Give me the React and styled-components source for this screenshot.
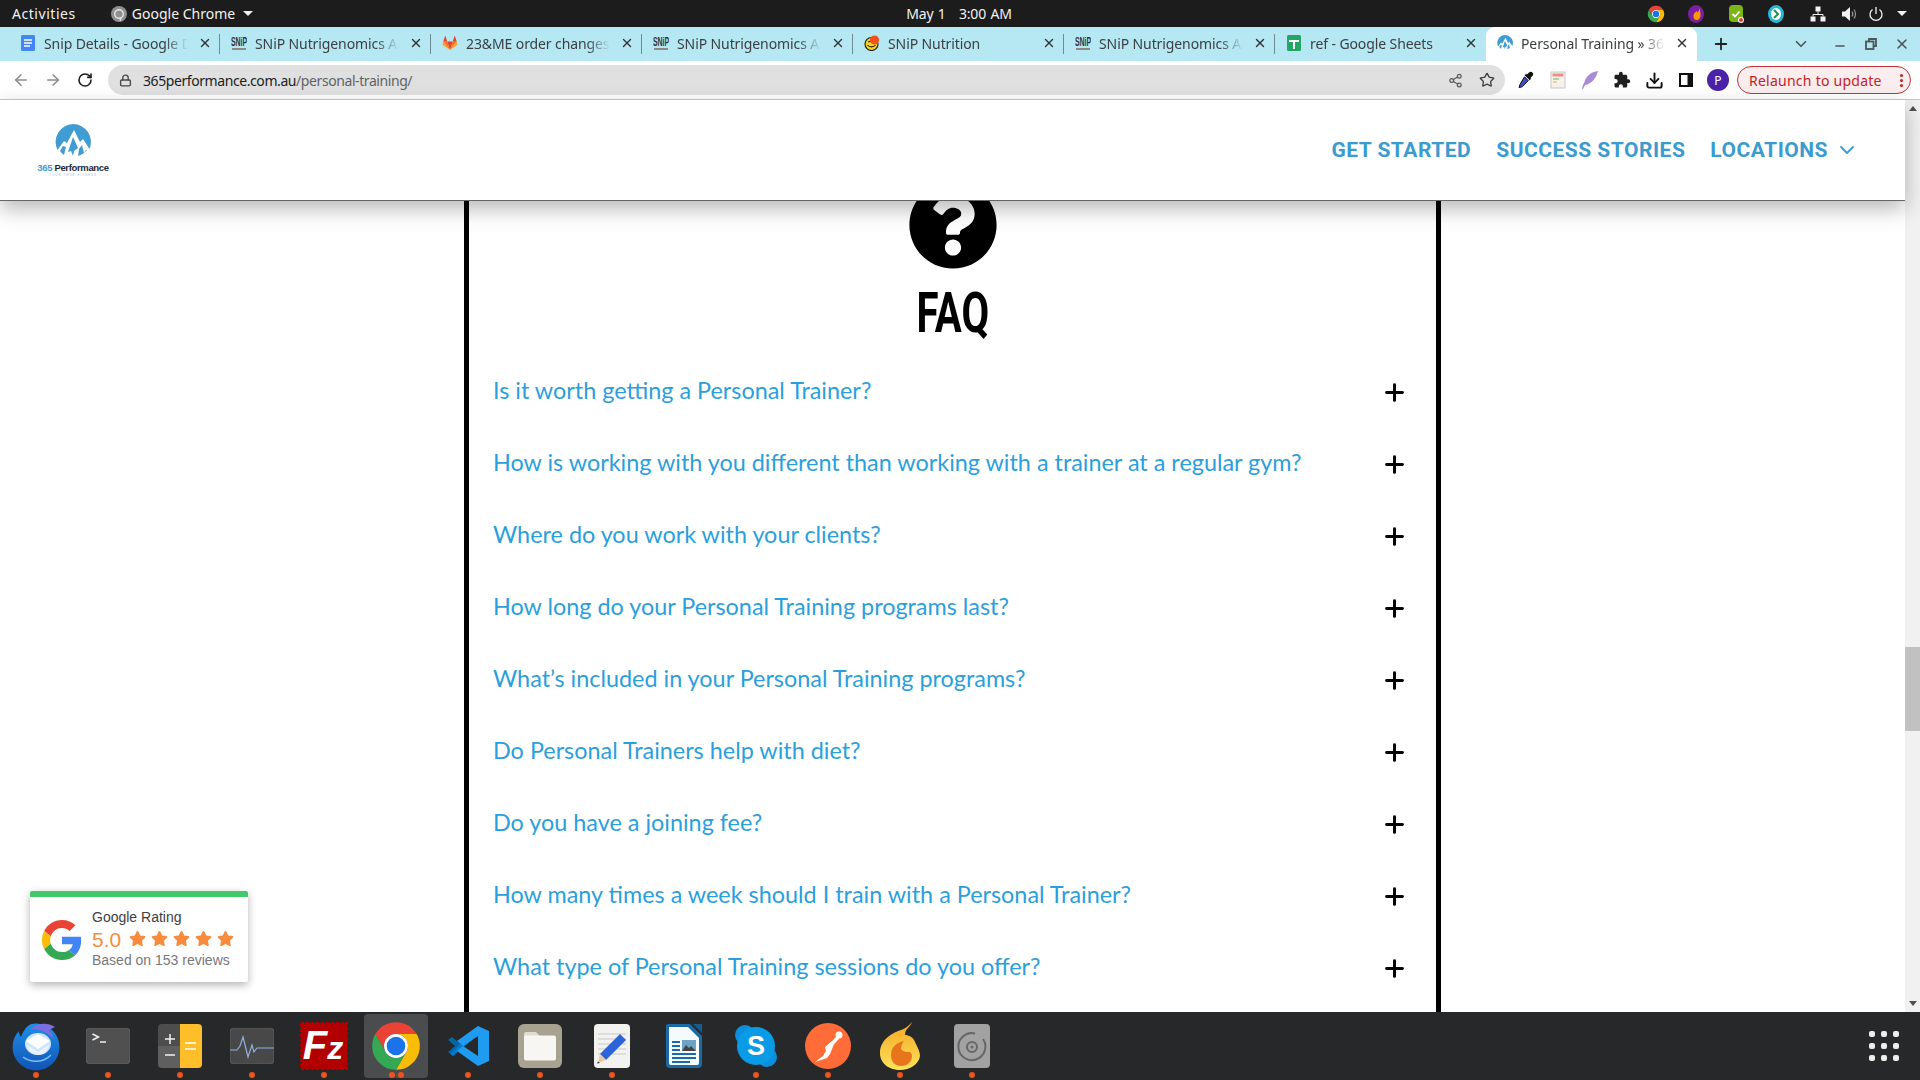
import React from "react";
import styled, { createGlobalStyle } from "styled-components";
import { FaQuestionCircle, FaStar } from "react-icons/fa";
import {
  ArrowLeft,
  ArrowRight,
  RotateCw,
  Lock,
  Share2,
  Star,
  Download,
  X,
  Plus,
  ChevronDown,
  Minus,
} from "lucide-react";

const GlobalStyle = createGlobalStyle`
  html, body { margin: 0; padding: 0; background: #fff; overflow: hidden; }
  * { box-sizing: border-box; }
`;

const UI_FONT = `"Noto Sans", "Open Sans", sans-serif`;

const Screen = styled.div`
  width: 1920px;
  height: 1080px;
  display: flex;
  flex-direction: column;
  position: relative;
  overflow: hidden;
  font-family: ${UI_FONT};
`;

/* gnome top bar */
const TopBar = styled.div`
  height: 27px;
  flex: none;
  background: #1c1c1c;
  color: #f2f2f2;
  display: grid;
  grid-template-columns: 1fr auto 1fr;
  align-items: center;
  font-size: 14px;
  padding: 0 14px 0 12px;
`;
const TopLeft = styled.div`
  display: flex;
  align-items: center;
`;
const Activities = styled.span`
  letter-spacing: 0.55px;
`;
const AppName = styled.div`
  display: flex;
  align-items: center;
  gap: 5px;
  margin-left: 35px;
`;
const Caret = styled.span`
  width: 0;
  height: 0;
  margin-left: 3px;
  border-left: 5px solid transparent;
  border-right: 5px solid transparent;
  border-top: 5px solid #f2f2f2;
`;
const Clock = styled.div`
  letter-spacing: -0.2px;
  word-spacing: 1px;
  white-space: pre;
`;
const Tray = styled.div`
  display: flex;
  justify-content: flex-end;
  align-items: center;
`;
const TrayItem = styled.div`
  width: ${(p) => p.$w}px;
  display: flex;
  justify-content: center;
  align-items: center;
`;

/* chrome tabs */
const TabStrip = styled.div`
  height: 34px;
  flex: none;
  background: #b5e8f2;
  display: flex;
  align-items: stretch;
  padding: 0 5px 0 9px;
`;
const Tab = styled.div`
  width: 211px;
  flex: none;
  position: relative;
  display: flex;
  align-items: center;
  gap: 8px;
  padding: 0 6px 2px 11px;
  font-size: 14px;
  letter-spacing: -0.1px;
  color: #3c4043;
  background: ${(p) => (p.$active ? "#fff" : "transparent")};
  border-radius: ${(p) => (p.$active ? "9px 9px 0 0" : "0")};

  &::after {
    content: "";
    position: absolute;
    right: 0;
    top: 7px;
    bottom: 7px;
    width: 1px;
    background: ${(p) => (p.$sep ? "#6d8b91" : "transparent")};
  }
`;
const TabTitle = styled.span`
  flex: 1;
  overflow: hidden;
  white-space: nowrap;
  -webkit-mask-image: linear-gradient(to right, #000 84%, transparent 100%);
  mask-image: linear-gradient(to right, #000 84%, transparent 100%);
`;
const FavSlot = styled.span`
  width: 16px;
  height: 16px;
  flex: none;
  display: flex;
  align-items: center;
  justify-content: center;
  overflow: hidden;
`;
const TabClose = styled(X)`
  width: 14px;
  height: 14px;
  flex: none;
  margin: 0 2px;
  color: #303336;
  stroke-width: 2.4;
`;
const NewTab = styled.div`
  width: 48px;
  display: flex;
  align-items: center;
  justify-content: center;
  color: #222;
`;
const WinControls = styled.div`
  margin-left: auto;
  display: flex;
  align-items: center;
  color: #4d5558;
`;
const WinButton = styled.div`
  width: ${(p) => p.$w || 26}px;
  margin-right: ${(p) => p.$gap || 0}px;
  padding-top: ${(p) => p.$drop || 0}px;
  display: flex;
  justify-content: center;
`;

/* chrome toolbar */
const Toolbar = styled.div`
  height: 39px;
  flex: none;
  background: #fff;
  border-bottom: 1px solid #c9c9c9;
  display: flex;
  align-items: center;
  padding: 0 9px 0 5px;
`;
const ToolButton = styled.div`
  width: 32px;
  flex: none;
  display: flex;
  align-items: center;
  justify-content: center;
  color: ${(p) => p.$color || "#1f1f1f"};
`;
const Omnibox = styled.div`
  flex: 1;
  height: 30px;
  margin: 0 5px 0 7px;
  background: #e0e0e0;
  border-radius: 15px;
  display: flex;
  align-items: center;
  padding: 0 2px 0 11px;
  color: #5f6368;
`;
const Url = styled.div`
  flex: 1;
  margin-left: 11px;
  font-size: 14px;
  letter-spacing: -0.42px;
  color: #5f6368;

  b {
    font-weight: 400;
    color: #202124;
  }
`;
const Avatar = styled.div`
  width: 22px;
  height: 22px;
  border-radius: 50%;
  background: #4a22a8;
  color: #fff;
  font-size: 12px;
  display: flex;
  align-items: center;
  justify-content: center;
`;
const Relaunch = styled.div`
  width: 174px;
  height: 28px;
  margin-left: 3px;
  border: 1px solid #c5303a;
  border-radius: 14px;
  background: #f9eded;
  color: #c5221f;
  font-size: 14px;
  letter-spacing: 0.25px;
  display: flex;
  align-items: center;
  justify-content: space-between;
  padding: 0 7px 0 11px;
`;
const KebabDots = styled.span`
  width: 3px;
  height: 3px;
  border-radius: 50%;
  background: #c5221f;
  box-shadow: 0 -5px 0 #c5221f, 0 5px 0 #c5221f;
`;

/* website */
const Viewport = styled.div`
  flex: 1;
  min-height: 0;
  display: flex;
  position: relative;
`;
const Page = styled.div`
  flex: 1;
  min-width: 0;
  display: flex;
  flex-direction: column;
  background: #fff;
`;
const SiteNav = styled.header`
  height: 101px;
  flex: none;
  position: relative;
  z-index: 2;
  background: #fff;
  border-bottom: 1px solid #666;
  box-shadow: 0 8px 20px rgba(0, 0, 0, 0.28);
  display: flex;
  align-items: center;
  justify-content: space-between;
  padding: 0 46px 0 38px;
`;
const Logo = styled.div`
  width: 70px;
  display: flex;
  flex-direction: column;
  align-items: center;
`;
const LogoName = styled.div`
  margin-top: 2px;
  font-family: "Liberation Sans", sans-serif;
  font-size: 9.5px;
  font-weight: 700;
  line-height: 11px;
  letter-spacing: -0.35px;
  white-space: nowrap;
  color: #1d2733;

  span {
    color: #3f9dd3;
  }
`;
const LogoTag = styled.div`
  font-family: "Liberation Sans", sans-serif;
  font-size: 3px;
  line-height: 4px;
  letter-spacing: 1px;
  color: #8fc6e6;
  white-space: nowrap;
`;
const NavLinks = styled.nav`
  display: flex;
  align-items: center;
  gap: 25px;
  font-family: Roboto, sans-serif;
  font-weight: 700;
  font-size: 21px;
  letter-spacing: 0.5px;
  color: #3a9bd0;
`;
const NavLink = styled.a`
  display: flex;
  align-items: center;
  gap: 7px;
  white-space: nowrap;
`;
const Content = styled.main`
  flex: 1;
  min-height: 0;
  overflow: hidden;
  display: flex;
  justify-content: center;
`;
const FaqColumn = styled.section`
  width: 977px;
  border-left: 5px solid #000;
  border-right: 5px solid #000;
  display: flex;
  flex-direction: column;
  align-items: center;
  padding: 0 24px;
`;
const QuestionBadge = styled(FaQuestionCircle)`
  width: 90px;
  height: 90px;
  flex: none;
  margin-top: -21px;
  margin-bottom: -1px;
  color: #000;
`;
const Heading = styled.h2`
  height: 87px;
  flex: none;
  margin: 0;
  padding-top: 14px;
  font-family: "Liberation Sans Narrow", Roboto, sans-serif;
  font-size: 55px;
  line-height: 60px;
  font-weight: 700;
  color: #000;
  transform: scaleX(0.73);
`;
const FaqList = styled.div`
  align-self: stretch;
  flex: none;
`;
const FaqRow = styled.div`
  height: 72px;
  display: flex;
  align-items: center;
  justify-content: space-between;
  padding-right: 4px;
`;
const FaqQuestion = styled.div`
  font-family: Lato, sans-serif;
  font-size: 23.4px;
  font-weight: 400;
  color: #2b9fdc;
  white-space: nowrap;
  margin-top: -5px;
`;
const FaqPlus = styled(Plus)`
  width: 27px;
  height: 27px;
  flex: none;
  margin-top: 1px;
  color: #000;
  stroke-width: 2.6;
`;
const ScrollBar = styled.div`
  width: 15px;
  flex: none;
  background: #f1f1f1;
  display: flex;
  flex-direction: column;
  align-items: center;
  justify-content: space-between;
  position: relative;
  padding: 6px 0;
`;
const ScrollArrow = styled.span`
  width: 0;
  height: 0;
  border-left: 4px solid transparent;
  border-right: 4px solid transparent;
  ${(p) =>
    p.$up ? "border-bottom: 5px solid #505050;" : "border-top: 5px solid #505050;"}
`;
const ScrollThumb = styled.span`
  position: absolute;
  left: 0;
  right: 0;
  top: 547px;
  height: 84px;
  background: #c1c1c1;
`;

/* google rating badge floats over the page */
const RatingCard = styled.aside`
  position: absolute;
  left: 30px;
  bottom: 30px;
  width: 218px;
  height: 91px;
  z-index: 1;
  background: #fff;
  border-top: 6px solid #43c76b;
  border-radius: 2px;
  box-shadow: 0 3px 9px rgba(0, 0, 0, 0.3);
  display: flex;
  align-items: center;
  gap: 10px;
  padding: 0 0 0 12px;
  font-family: "Liberation Sans", sans-serif;
`;
const RatingText = styled.div`
  display: flex;
  flex-direction: column;
`;
const RatingTitle = styled.div`
  font-size: 14px;
  line-height: 15px;
  color: #3c4043;
`;
const RatingLine = styled.div`
  display: flex;
  align-items: center;
  gap: 8px;
  height: 27px;
`;
const RatingScore = styled.span`
  font-size: 21px;
  margin-top: 3px;
  color: #f98c3c;
`;
const Stars = styled.span`
  display: flex;
  gap: 5px;
  color: #f98c3c;
`;
const RatingSub = styled.div`
  font-size: 14px;
  line-height: 17px;
  color: #77787b;
`;

/* ubuntu dock */
const Dock = styled.footer`
  height: 68px;
  flex: none;
  position: relative;
  z-index: 3;
  background: #27282a;
  display: flex;
  align-items: center;
  padding-right: 21px;
`;
const DockSlot = styled.div`
  width: 64px;
  height: 64px;
  margin: 2px 4px 2px;
  border-radius: 4px;
  position: relative;
  display: flex;
  align-items: center;
  justify-content: center;
  background: ${(p) => (p.$active ? "#4b4c4e" : "transparent")};
`;
const RunDots = styled.div`
  position: absolute;
  left: 0;
  right: 0;
  bottom: 0;
  display: flex;
  justify-content: center;
  gap: 3px;
`;
const RunDot = styled.span`
  width: 6px;
  height: 6px;
  border-radius: 50%;
  background: #e95420;
`;
const AppGrid = styled.div`
  margin-left: auto;
  display: grid;
  grid-template-columns: repeat(3, 6px);
  grid-auto-rows: 6px;
  gap: 6px;

  span {
    background: #eeeeec;
    border-radius: 2px;
  }
`;

/* drawings */
const ChromeLogo = ({ size }) => (
  <svg width={size} height={size} viewBox="0 0 48 48">
    <path fill="#ea4335" d="M4.95 13A22 22 0 0 1 43.05 13H24A11 11 0 0 0 14.47 29.5Z" />
    <path fill="#fbbc05" d="M43.05 13A22 22 0 0 1 24 46L33.53 29.5A11 11 0 0 0 24 13Z" />
    <path fill="#34a853" d="M24 46A22 22 0 0 1 4.95 13L14.47 29.5A11 11 0 0 0 33.53 29.5Z" />
    <circle cx="24" cy="24" r="11" fill="#fff" />
    <circle cx="24" cy="24" r="8.6" fill="#1a73e8" />
  </svg>
);

const GoogleG = () => (
  <svg width="40" height="40" viewBox="0 0 48 48">
    <path fill="#ea4335" d="M24 9.5c3.54 0 6.71 1.22 9.21 3.6l6.85-6.85C35.9 2.38 30.47 0 24 0 14.62 0 6.51 5.38 2.56 13.22l7.98 6.19C12.43 13.72 17.74 9.5 24 9.5z" />
    <path fill="#4285f4" d="M46.98 24.55c0-1.57-.15-3.09-.38-4.55H24v9.02h12.94c-.58 2.96-2.26 5.48-4.78 7.18l7.73 6c4.51-4.18 7.09-10.36 7.09-17.65z" />
    <path fill="#fbbc05" d="M10.53 28.59c-.48-1.45-.76-2.99-.76-4.59s.27-3.14.76-4.59l-7.98-6.19C.92 16.46 0 20.12 0 24c0 3.88.92 7.54 2.56 10.78l7.97-6.19z" />
    <path fill="#34a853" d="M24 48c6.48 0 11.93-2.13 15.89-5.81l-7.73-6c-2.15 1.45-4.92 2.3-8.16 2.3-6.26 0-11.57-4.22-13.47-9.91l-7.98 6.19C6.51 42.62 14.62 48 24 48z" />
  </svg>
);

const MountainMark = ({ size }) => (
  <svg width={size} height={size} viewBox="0 0 36 36">
    <path fill="#3f9dd3" d="M18 0a18 18 0 0 1 16.5 25L28 15l-3 3-6-12-7 13-3-2-6.5 9A18 18 0 0 1 18 0z" />
    <path fill="#3f9dd3" d="M18 13l5 11-4 3-1 5-2-5-3 1z" />
    <path fill="#3f9dd3" d="M27 21l2 8 2-3 1 0a18 18 0 0 1-9 6l1-7z" />
    <path fill="#3f9dd3" d="M8 22l3 1-2 8a18 18 0 0 1-4-4z" />
  </svg>
);

const GitlabFav = () => (
  <svg width="16" height="16" viewBox="0 0 16 16">
    <path fill="#e24329" d="M8 15L5.2 6.5h5.6z" />
    <path fill="#fc6d26" d="M8 15L5.2 6.5H1.3zM8 15l2.8-8.5h3.9z" />
    <path fill="#fca326" d="M1.3 6.5L.5 9.2c-.1.3 0 .5.2.7L8 15zM14.7 6.5l.8 2.7c.1.3 0 .5-.2.7L8 15z" />
    <path fill="#e24329" d="M1.3 6.5h3.9L3.5 1.2c-.1-.3-.4-.3-.5 0zM14.7 6.5h-3.9l1.7-5.3c.1-.3.4-.3.5 0z" />
  </svg>
);

const DocsFav = () => (
  <svg width="16" height="16" viewBox="0 0 16 16">
    <rect x="1" width="14" height="16" rx="1.5" fill="#4285f4" />
    <path stroke="#fff" strokeWidth="1.6" d="M4 5h8M4 8h8M4 11h6" />
  </svg>
);

const SmileFav = () => (
  <svg width="16" height="16" viewBox="0 0 16 16">
    <circle cx="7.5" cy="9" r="6.5" fill="#f7d51d" stroke="#222" strokeWidth="1.2" />
    <path d="M3.5 10c2 2.5 6 2.5 8 0M4 7l3-1" stroke="#222" strokeWidth="1.2" fill="none" />
    <circle cx="10.5" cy="5" r="4.6" fill="#f4511e" />
  </svg>
);

const SheetsFav = () => (
  <svg width="16" height="16" viewBox="0 0 16 16">
    <rect x="1" width="14" height="16" rx="1.5" fill="#23a566" />
    <path stroke="#fff" strokeWidth="2" d="M3 6h10M8 6v8" />
  </svg>
);

const SnipIcon = () => (
  <svg width="16" height="16" viewBox="0 0 16 16">
    <text
      x="0"
      y="11"
      textLength="16"
      lengthAdjust="spacingAndGlyphs"
      fontFamily="Liberation Sans"
      fontWeight="700"
      fontSize="13"
      fill="#333"
    >
      SNiP
    </text>
    <path stroke="#8a8a8a" strokeWidth="2" d="M1 14h14" />
  </svg>
);

const PipetteIcon = () => (
  <svg width="18" height="18" viewBox="0 0 18 18">
    <path fill="#111" d="M12 1.5a2.4 2.4 0 0 1 3.4 3.4l-2 2 .8.8-1.6 1.6-5-5 1.6-1.6.8.8z" />
    <path fill="#3d4fc4" stroke="#111" strokeWidth="1" d="M7.5 5.8l3.8 3.8-6.2 6.2-3 .8.8-3z" />
  </svg>
);

const NotesIcon = () => (
  <svg width="16" height="18" viewBox="0 0 16 18">
    <rect x="1" y="1" width="14" height="16" fill="#f5f2ee" stroke="#c9c9c9" />
    <rect x="2.5" y="2.5" width="11" height="3" fill="#f28b82" />
    <path stroke="#8bc48a" strokeWidth="1.4" d="M3 8h6" />
    <path stroke="#f0c36d" strokeWidth="1.4" d="M3 11h4" />
  </svg>
);

const FeatherIcon = () => (
  <svg width="18" height="20" viewBox="0 0 18 20">
    <path fill="#a98bd8" d="M17 1C10 2 5 6 3.5 12L2 15l-1 4 1 .3 2-4.3C10 14 15 9 17 1z" />
  </svg>
);

const ExtensionIcon = () => (
  <svg width="18" height="18" viewBox="0 0 24 24" fill="#1f1f1f">
    <path d="M20.5 11H19V7c0-1.1-.9-2-2-2h-4V3.5a2.5 2.5 0 0 0-5 0V5H4c-1.1 0-2 .9-2 2v3.8h1.5c1.5 0 2.7 1.2 2.7 2.7s-1.2 2.7-2.7 2.7H2V20c0 1.1.9 2 2 2h3.8v-1.5c0-1.5 1.2-2.7 2.7-2.7s2.7 1.2 2.7 2.7V22H17c1.1 0 2-.9 2-2v-4h1.5a2.5 2.5 0 0 0 0-5z" />
  </svg>
);

const SidePanelIcon = () => (
  <svg width="16" height="16" viewBox="0 0 16 16">
    <rect x="1" y="1" width="14" height="14" fill="#111" />
    <rect x="3" y="3" width="6.5" height="10" fill="#fff" />
  </svg>
);

const SaveIcon = () => <Download size={19} strokeWidth={2.4} color="#111" />;

const GrayChrome = () => (
  <svg width="16" height="16" viewBox="0 0 16 16">
    <circle cx="8" cy="8" r="8" fill="#8f8f8f" />
    <circle cx="8" cy="8" r="4.3" fill="none" stroke="#e8e8e8" strokeWidth="1.4" />
    <path stroke="#e8e8e8" strokeWidth="1.2" d="M10 12l-1 3" />
  </svg>
);

const FlameTray = () => (
  <svg width="16" height="18" viewBox="0 0 16 18">
    <ellipse cx="8" cy="9" rx="8" ry="9" fill="#7b1fa2" />
    <path fill="#ff9800" d="M11 3c.5 3-1 3-1 5-1-1-1-2-1-2-2 1-4 3-3.5 6 .3 2 1.5 3 3 3 2.5 0 4-2 4-4.5C12.5 7 12 5 11 3z" />
  </svg>
);

const GreenTray = () => (
  <svg width="18" height="20" viewBox="0 0 18 20">
    <rect x="2" y="1" width="14" height="17" rx="4" fill="#7cb518" />
    <path d="M5.5 10l2.5 2.5 4.5-5" fill="none" stroke="#fff" strokeWidth="1.8" />
    <circle cx="14" cy="16" r="3" fill="#fff" />
    <circle cx="14" cy="16" r="2" fill="#e53935" />
  </svg>
);

const TealTray = () => (
  <svg width="16" height="18" viewBox="0 0 16 18">
    <ellipse cx="8" cy="9" rx="8" ry="9" fill="#29b6d8" />
    <ellipse cx="8" cy="9" rx="5" ry="6" fill="#fff" />
    <path d="M6 5l4 4-4 4" fill="none" stroke="#1c8f5a" strokeWidth="2" />
  </svg>
);

const NetworkIcon = () => (
  <svg width="16" height="16" viewBox="0 0 16 16" fill="#f2f2f2">
    <rect x="5.5" y="0.5" width="5" height="5" />
    <rect x="0.5" y="10.5" width="5" height="5" />
    <rect x="10.5" y="10.5" width="5" height="5" />
    <path stroke="#f2f2f2" fill="none" d="M8 5.5v3M3 10.5v-2h10v2" />
  </svg>
);

const VolumeIcon = () => (
  <svg width="16" height="16" viewBox="0 0 16 16" fill="none">
    <path fill="#f2f2f2" d="M1 5.5h3L9 1v14l-5-4.5H1z" />
    <path stroke="#9a9a9a" strokeWidth="1.2" d="M11 5.5c1 1.5 1 3.5 0 5M13 3.5c2 2.5 2 6.5 0 9" />
  </svg>
);

const PowerIcon = () => (
  <svg width="16" height="16" viewBox="0 0 16 16" fill="none" stroke="#f2f2f2" strokeWidth="1.3">
    <path d="M8 1v7" />
    <path d="M4.5 3.5a6 6 0 1 0 7 0" />
  </svg>
);

const RestoreIcon = () => (
  <svg width="12" height="12" viewBox="0 0 12 12" fill="none" stroke="#4d5558" strokeWidth="1.8">
    <rect x="1" y="3.5" width="7.5" height="7.5" />
    <path d="M4 3V1h7v7H8.5" />
  </svg>
);

const Thunderbird = () => (
  <svg width="50" height="50" viewBox="0 0 50 50">
    <defs>
      <linearGradient id="tb" x1="0" y1="0" x2="0" y2="1">
        <stop offset="0" stopColor="#1f8fe8" />
        <stop offset="1" stopColor="#1155b5" />
      </linearGradient>
    </defs>
    <circle cx="25" cy="26" r="23.5" fill="url(#tb)" />
    <path fill="#27282a" d="M2 2h20c-6 2-10 8-12 14-2-3-3-6-3-9-4 6-4 8-5 8z" />
    <path fill="#7b6ee0" d="M20 8c6-6 16-7 24-2l-6 3c3 3 4 6 4 9-5-7-14-10-22-10z" />
    <ellipse cx="27" cy="23" rx="13" ry="11" fill="#cfe5fb" />
    <path fill="#fff" d="M15 20l12-7 12 7-12 8z" />
    <path fill="#eaf4fd" d="M16 24l11 7 11-7c-1 6-6 10-11 10s-10-4-11-10z" />
    <path d="M12 36c8 6 20 6 28-2" stroke="#7fbdf2" strokeWidth="1.5" fill="none" />
  </svg>
);

const Terminal = () => (
  <svg width="44" height="36" viewBox="0 0 44 36">
    <rect width="44" height="36" rx="4" fill="#505050" stroke="#5f5f5f" />
    <path d="M6.5 6l6 3-6 3" fill="none" stroke="#f0f0f0" strokeWidth="1.5" />
    <path d="M14 14h6" stroke="#f0f0f0" strokeWidth="1.5" />
  </svg>
);

const Calculator = () => (
  <svg width="44" height="44" viewBox="0 0 44 44">
    <path fill="#4d4d4d" d="M4 0h18v22H0V4a4 4 0 0 1 4-4z" />
    <path fill="#5f5f5f" d="M0 22h22v22H4a4 4 0 0 1-4-4z" />
    <path fill="#fdbe2a" d="M22 0h18a4 4 0 0 1 4 4v36a4 4 0 0 1-4 4H22z" />
    <path stroke="#f2f2f2" strokeWidth="1.5" d="M7 15h10M12 10v10M7 31h10" />
    <path stroke="#fff" strokeWidth="1.5" d="M27 19h11M27 25h11" />
  </svg>
);

const SystemMonitor = () => (
  <svg width="44" height="36" viewBox="0 0 44 36">
    <rect width="44" height="36" rx="4" fill="#484848" stroke="#5a5a5a" />
    <path d="M0 22h7l3-4 3-9 5 20 4-12 2 7 3-4h17" fill="none" stroke="#8fb0dc" strokeWidth="1.2" />
  </svg>
);

const FileZilla = () => (
  <svg width="48" height="48" viewBox="0 0 48 48">
    <rect x="1" y="1" width="46" height="46" fill="#b20000" stroke="#b20000" strokeWidth="2" strokeDasharray="3 2" />
    <text
      x="23"
      y="37"
      textAnchor="middle"
      fontFamily="Liberation Sans"
      fontWeight="700"
      fontStyle="italic"
      fill="#fff"
    >
      <tspan fontSize="40">F</tspan>
      <tspan fontSize="32">z</tspan>
    </text>
  </svg>
);

const VSCode = () => (
  <svg width="42" height="42" viewBox="0 0 42 42">
    <path fill="#0065a9" d="M1 15l4-3 11 9-11 9-4-3 7-6z" />
    <path fill="#007acc" d="M31 1L5 27l-2 2 3 2 25-21z" />
    <path fill="#1f9cf0" d="M31 1l11 5v30l-11 5zM31 1v10L16 21 10 16zM31 41V31L16 21l-6 5z" />
  </svg>
);

const Files = () => (
  <svg width="44" height="44" viewBox="0 0 44 44">
    <rect width="44" height="44" rx="6" fill="#a8a290" />
    <path fill="#e0dccf" d="M6 13V10a2 2 0 0 1 2-2h10l4 4v4H6z" />
    <rect x="6" y="11.5" width="32" height="25" rx="2" fill="#f7f6f3" />
  </svg>
);

const Gedit = () => (
  <svg width="36" height="44" viewBox="0 0 36 44">
    <rect width="36" height="44" rx="4" fill="#f2f2f0" />
    <path stroke="#c9c9c9" d="M4 10h28M4 15h28M4 20h28M4 25h28M4 30h28" />
    <path fill="#2c63d8" d="M26 10l6 6L12 36l-6-6z" />
    <path fill="#e8c9a0" d="M6 30l6 6-8 3z" />
    <path fill="#333" d="M4 37.5l2 1.5-3 .5z" />
  </svg>
);

const Writer = () => (
  <svg width="36" height="44" viewBox="0 0 36 44">
    <path fill="#1a6aa6" d="M2 0h22l12 12v28a4 4 0 0 1-4 4H4a4 4 0 0 1-4-4V2a2 2 0 0 1 2-2z" />
    <path fill="#f5fafd" d="M3 3h19l11 11v25a2 2 0 0 1-2 2H5a2 2 0 0 1-2-2z" />
    <path fill="#155c91" d="M27 0l9 9V0z" />
    <path stroke="#1a6aa6" strokeWidth="2" d="M6 18h8M6 22h8M6 26h8M6 30h24M6 34h24M6 38h18" />
    <rect x="16" y="16" width="14" height="11" fill="#6ea2c6" />
    <path fill="#444" d="M16 27l4-6 3 3 2-2 5 5z" />
  </svg>
);

const Skype = () => (
  <svg width="44" height="44" viewBox="0 0 44 44">
    <circle cx="11" cy="11" r="10" fill="#0d8fdd" />
    <circle cx="33" cy="33" r="10" fill="#0d8fdd" />
    <circle cx="22" cy="22" r="19" fill="#0a9be6" />
    <text x="22" y="31" textAnchor="middle" fontFamily="Liberation Sans" fontWeight="700" fontSize="27" fill="#fff">
      S
    </text>
  </svg>
);

const Postman = () => (
  <svg width="46" height="46" viewBox="0 0 46 46">
    <circle cx="23" cy="23" r="23" fill="#ff6c37" />
    <circle cx="34" cy="12" r="3.5" fill="#fff" />
    <path fill="#fff" d="M32 13l2 3-5 5-4 10-3 4-9 3-3 1 8-6 3-5-1-4 7-6z" />
  </svg>
);

const Flame = () => (
  <svg width="40" height="48" viewBox="0 0 40 48">
    <defs>
      <linearGradient id="fl" x1="0" y1="0" x2="0" y2="1">
        <stop offset="0" stopColor="#f5a623" />
        <stop offset="1" stopColor="#fde25a" />
      </linearGradient>
    </defs>
    <path fill="url(#fl)" d="M32 0c-2 6-7 6-7 13 4 0 8 2 10 7 3 6 5 10 5 14-1 8-10 14-20 14S0 42 0 31C0 17 14 10 21 8c3-1 8-4 11-8z" />
    <path fill="#e8741c" d="M24 19c-7 1-13 6-13 14 0 7 4 11 10 11 7 0 11-5 11-10 0-4-3-5-5-4-2 0-5-1-6-3 0-3 1-6 3-8z" />
  </svg>
);

const Disc = () => (
  <svg width="36" height="44" viewBox="0 0 36 44">
    <rect width="36" height="44" rx="4" fill="#a2a2a2" />
    <path d="M29 15a13.5 13.5 0 1 1-8-5.5" fill="none" stroke="#666" strokeWidth="2" />
    <circle cx="18" cy="23" r="5" fill="none" stroke="#666" strokeWidth="2" />
    <circle cx="18" cy="23" r="1.5" fill="#666" />
  </svg>
);

const tabs = [
  { title: "Snip Details - Google Docs", Icon: DocsFav, sep: true },
  { title: "SNiP Nutrigenomics Analysis", Icon: SnipIcon, sep: true },
  { title: "23&ME order changes needed", Icon: GitlabFav, sep: true },
  { title: "SNiP Nutrigenomics Analysis", Icon: SnipIcon, sep: true },
  { title: "SNiP Nutrition", Icon: SmileFav, sep: true },
  { title: "SNiP Nutrigenomics Analysis", Icon: SnipIcon, sep: true },
  { title: "ref - Google Sheets", Icon: SheetsFav },
  { title: "Personal Training » 365", Icon: () => <MountainMark size={16} />, active: true },
];

const questions = [
  "Is it worth getting a Personal Trainer?",
  "How is working with you different than working with a trainer at a regular gym?",
  "Where do you work with your clients?",
  "How long do your Personal Training programs last?",
  "What’s included in your Personal Training programs?",
  "Do Personal Trainers help with diet?",
  "Do you have a joining fee?",
  "How many times a week should I train with a Personal Trainer?",
  "What type of Personal Training sessions do you offer?",
];

const dockApps = [
  { id: "thunderbird", Icon: Thunderbird, dots: 1 },
  { id: "terminal", Icon: Terminal, dots: 1 },
  { id: "calculator", Icon: Calculator, dots: 1 },
  { id: "monitor", Icon: SystemMonitor, dots: 1 },
  { id: "filezilla", Icon: FileZilla, dots: 1 },
  { id: "chrome", Icon: () => <ChromeLogo size={52} />, dots: 2, active: true },
  { id: "vscode", Icon: VSCode, dots: 1 },
  { id: "files", Icon: Files, dots: 1 },
  { id: "gedit", Icon: Gedit, dots: 1 },
  { id: "writer", Icon: Writer, dots: 0 },
  { id: "skype", Icon: Skype, dots: 1 },
  { id: "postman", Icon: Postman, dots: 1 },
  { id: "flame", Icon: Flame, dots: 1 },
  { id: "disc", Icon: Disc, dots: 1 },
];

export default function App() {
  return (
    <Screen>
      <GlobalStyle />
      <TopBar>
        <TopLeft>
          <Activities>Activities</Activities>
          <AppName>
            <GrayChrome />
            Google Chrome
            <Caret />
          </AppName>
        </TopLeft>
        <Clock>May 1   3:00 AM</Clock>
        <Tray>
          <TrayItem $w={40}>
            <ChromeLogo size={18} />
          </TrayItem>
          <TrayItem $w={40}>
            <FlameTray />
          </TrayItem>
          <TrayItem $w={40}>
            <GreenTray />
          </TrayItem>
          <TrayItem $w={40}>
            <TealTray />
          </TrayItem>
          <TrayItem $w={44}>
            <NetworkIcon />
          </TrayItem>
          <TrayItem $w={18}>
            <VolumeIcon />
          </TrayItem>
          <TrayItem $w={36}>
            <PowerIcon />
          </TrayItem>
          <TrayItem $w={12}>
            <Caret />
          </TrayItem>
        </Tray>
      </TopBar>

      <TabStrip>
        {tabs.map(({ title, Icon, sep, active }, i) => (
          <Tab key={i} $sep={sep} $active={active}>
            <FavSlot>
              <Icon />
            </FavSlot>
            <TabTitle>{title}</TabTitle>
            <TabClose />
          </Tab>
        ))}
        <NewTab>
          <Plus size={18} strokeWidth={2.4} />
        </NewTab>
        <WinControls>
          <WinButton $gap={13}>
            <ChevronDown size={18} strokeWidth={2.2} />
          </WinButton>
          <WinButton $drop={4}>
            <Minus size={14} strokeWidth={2.4} />
          </WinButton>
          <WinButton $w={36}>
            <RestoreIcon />
          </WinButton>
          <WinButton>
            <X size={16} strokeWidth={2.4} />
          </WinButton>
        </WinControls>
      </TabStrip>

      <Toolbar>
        <ToolButton $color="#8a8a8a">
          <ArrowLeft size={18} strokeWidth={2} />
        </ToolButton>
        <ToolButton $color="#8a8a8a">
          <ArrowRight size={18} strokeWidth={2} />
        </ToolButton>
        <ToolButton>
          <RotateCw size={16} strokeWidth={2.4} />
        </ToolButton>
        <Omnibox>
          <Lock size={13} strokeWidth={2.6} color="#4a4a4a" />
          <Url>
            <b>365performance.com.au</b>/personal-training/
          </Url>
          <ToolButton $color="#5a5a5a">
            <Share2 size={15} strokeWidth={2} />
          </ToolButton>
          <ToolButton $color="#3c4043">
            <Star size={16} strokeWidth={2} />
          </ToolButton>
        </Omnibox>
        <ToolButton>
          <PipetteIcon />
        </ToolButton>
        <ToolButton>
          <NotesIcon />
        </ToolButton>
        <ToolButton>
          <FeatherIcon />
        </ToolButton>
        <ToolButton>
          <ExtensionIcon />
        </ToolButton>
        <ToolButton>
          <SaveIcon />
        </ToolButton>
        <ToolButton>
          <SidePanelIcon />
        </ToolButton>
        <ToolButton>
          <Avatar>P</Avatar>
        </ToolButton>
        <Relaunch>
          Relaunch to update
          <KebabDots />
        </Relaunch>
      </Toolbar>

      <Viewport>
        <Page>
          <SiteNav>
            <Logo>
              <MountainMark size={36} />
              <LogoName>
                <span>365</span> Performance
              </LogoName>
              <LogoTag>YOUR TRUE FITNESS</LogoTag>
            </Logo>
            <NavLinks>
              <NavLink>GET STARTED</NavLink>
              <NavLink>SUCCESS STORIES</NavLink>
              <NavLink>
                LOCATIONS
                <ChevronDown size={24} strokeWidth={1.8} />
              </NavLink>
            </NavLinks>
          </SiteNav>
          <Content>
            <FaqColumn>
              <QuestionBadge />
              <Heading>FAQ</Heading>
              <FaqList>
                {questions.map((q) => (
                  <FaqRow key={q}>
                    <FaqQuestion>{q}</FaqQuestion>
                    <FaqPlus />
                  </FaqRow>
                ))}
              </FaqList>
            </FaqColumn>
          </Content>
        </Page>
        <ScrollBar>
          <ScrollArrow $up />
          <ScrollThumb />
          <ScrollArrow />
        </ScrollBar>
        <RatingCard>
          <GoogleG />
          <RatingText>
            <RatingTitle>Google Rating</RatingTitle>
            <RatingLine>
              <RatingScore>5.0</RatingScore>
              <Stars>
                {[0, 1, 2, 3, 4].map((n) => (
                  <FaStar key={n} size={17} />
                ))}
              </Stars>
            </RatingLine>
            <RatingSub>Based on 153 reviews</RatingSub>
          </RatingText>
        </RatingCard>
      </Viewport>

      <Dock>
        {dockApps.map(({ id, Icon, dots, active }) => (
          <DockSlot key={id} $active={active}>
            <Icon />
            <RunDots>
              {Array.from({ length: dots }).map((_, n) => (
                <RunDot key={n} />
              ))}
            </RunDots>
          </DockSlot>
        ))}
        <AppGrid>
          {Array.from({ length: 9 }).map((_, n) => (
            <span key={n} />
          ))}
        </AppGrid>
      </Dock>
    </Screen>
  );
}
